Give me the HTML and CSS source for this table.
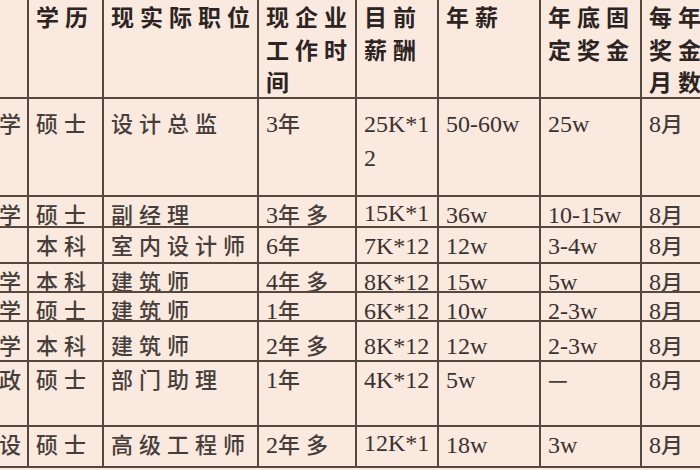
FILE: index.html
```html
<!DOCTYPE html>
<html lang="zh-CN">
<head>
<meta charset="utf-8">
<title>薪酬表</title>
<link rel="stylesheet" href="styles.css">
</head>
<body>
<div class="sheet">
  <div class="h c0"></div>
  <div class="h">学历</div>
  <div class="h">现实际职位</div>
  <div class="h">现企业<br>工作时<br>间</div>
  <div class="h">目前<br>薪酬</div>
  <div class="h">年薪</div>
  <div class="h">年底固<br>定奖金</div>
  <div class="h">每年终<br>奖金发<br>月数</div>

  <div class="c c0 r1">大学</div>
  <div class="c r1">硕士</div>
  <div class="c r1">设计总监</div>
  <div class="c r1"><span class="n">3</span>年</div>
  <div class="c r1"><span class="n">25K*12</span></div>
  <div class="c r1"><span class="n">50-60w</span></div>
  <div class="c r1"><span class="n">25w</span></div>
  <div class="c r1"><span class="n">8</span>月</div>

  <div class="c c0">大学</div>
  <div class="c">硕士</div>
  <div class="c">副经理</div>
  <div class="c"><span class="n">3</span>年多</div>
  <div class="c"><span class="n clip">15K*12</span></div>
  <div class="c"><span class="n">36w</span></div>
  <div class="c"><span class="n">10-15w</span></div>
  <div class="c"><span class="n">8</span>月</div>

  <div class="c c0"></div>
  <div class="c">本科</div>
  <div class="c">室内设计师</div>
  <div class="c"><span class="n">6</span>年</div>
  <div class="c"><span class="n">7K*12</span></div>
  <div class="c"><span class="n">12w</span></div>
  <div class="c"><span class="n">3-4w</span></div>
  <div class="c"><span class="n">8</span>月</div>

  <div class="c c0">大学</div>
  <div class="c">本科</div>
  <div class="c">建筑师</div>
  <div class="c"><span class="n">4</span>年多</div>
  <div class="c"><span class="n">8K*12</span></div>
  <div class="c"><span class="n">15w</span></div>
  <div class="c"><span class="n">5w</span></div>
  <div class="c"><span class="n">8</span>月</div>

  <div class="c c0">大学</div>
  <div class="c">硕士</div>
  <div class="c">建筑师</div>
  <div class="c"><span class="n">1</span>年</div>
  <div class="c"><span class="n">6K*12</span></div>
  <div class="c"><span class="n">10w</span></div>
  <div class="c"><span class="n">2-3w</span></div>
  <div class="c"><span class="n">8</span>月</div>

  <div class="c c0 r6">大学</div>
  <div class="c r6">本科</div>
  <div class="c r6">建筑师</div>
  <div class="c r6"><span class="n">2</span>年多</div>
  <div class="c r6"><span class="n">8K*12</span></div>
  <div class="c r6"><span class="n">12w</span></div>
  <div class="c r6"><span class="n">2-3w</span></div>
  <div class="c r6"><span class="n">8</span>月</div>

  <div class="c c0">行政</div>
  <div class="c">硕士</div>
  <div class="c">部门助理</div>
  <div class="c"><span class="n">1</span>年</div>
  <div class="c"><span class="n">4K*12</span></div>
  <div class="c"><span class="n">5w</span></div>
  <div class="c">—</div>
  <div class="c"><span class="n">8</span>月</div>

  <div class="c c0">建设</div>
  <div class="c">硕士</div>
  <div class="c">高级工程师</div>
  <div class="c"><span class="n">2</span>年多</div>
  <div class="c"><span class="n clip">12K*12</span></div>
  <div class="c"><span class="n">18w</span></div>
  <div class="c"><span class="n">3w</span></div>
  <div class="c"><span class="n">8</span>月</div>
</div>
</body>
</html>
```

FILE: styles.css
```css
html, body {
  margin: 0;
  padding: 0;
  width: 700px;
  height: 470px;
  overflow: hidden;
  background: #fae9de;
}

.sheet {
  display: grid;
  grid-template-columns: 60px 73px 153px 96px 80px 100px 99px 120px;
  grid-template-rows: 97px 96px 29px 34px 27px 27px 38px 63px 39px;
  gap: 2px;
  padding-bottom: 2px;
  margin-left: -33px;
  width: max-content;
  background: #54483f;
  font-family: "Noto Sans CJK SC", "Noto Sans CJK JP", sans-serif;
}

.sheet > div {
  background: #fae9de;
  overflow: hidden;
  padding-left: 7px;
}

.h {
  font-size: 23px;
  font-weight: 700;
  letter-spacing: 6px;
  line-height: 32.5px;
  color: #2b2422;
  white-space: nowrap;
}

.c {
  font-size: 22px;
  font-weight: 500;
  letter-spacing: 6px;
  line-height: 32px;
  color: #463e3b;
  word-break: break-all;
}

.n {
  font-family: "Liberation Serif", "DejaVu Serif", serif;
  font-size: 24px;
  font-weight: 400;
  letter-spacing: 0;
  color: #3a3230;
}

.clip {
  display: inline-block;
  vertical-align: top;
  width: 66px;
  white-space: nowrap;
  overflow: hidden;
}

.sheet > .c0 {
  padding-left: 0;
  text-align: right;
  white-space: nowrap;
}

.r1 {
  padding-top: 7px;
}

.r6 {
  padding-top: 6px;
}
```
